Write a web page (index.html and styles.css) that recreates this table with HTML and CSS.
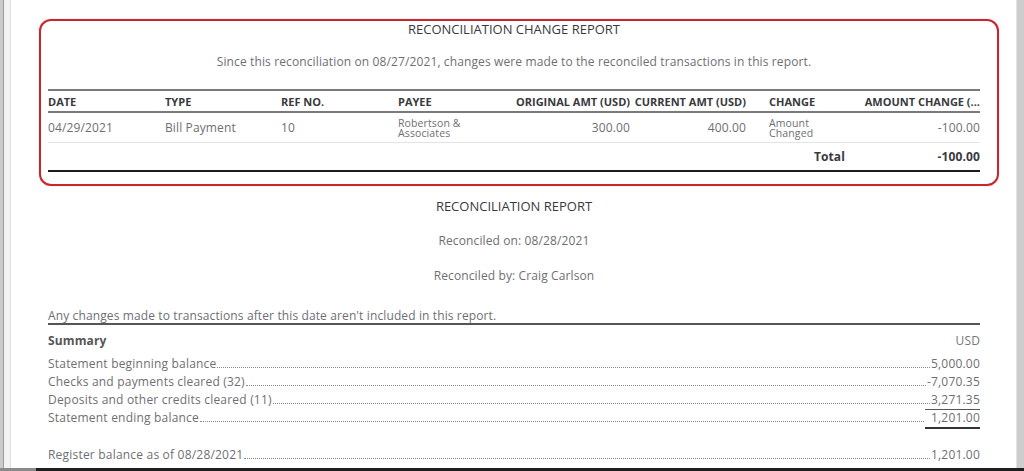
FILE: index.html
```html
<!DOCTYPE html>
<html>
<head>
<meta charset="utf-8">
<link rel="stylesheet" href="styles.css">
</head>
<body>
<div class="window">
  <div class="left-rail"></div>
  <div class="main">
    <div class="doc">
      <section class="change-box">
        <h1 class="title">RECONCILIATION CHANGE REPORT</h1>
        <p class="subtitle">Since this reconciliation on 08/27/2021, changes were made to the reconciled transactions in this report.</p>
        <div class="table">
          <div class="row head">
            <div class="c">DATE</div>
            <div class="c">TYPE</div>
            <div class="c">REF NO.</div>
            <div class="c">PAYEE</div>
            <div class="c num">ORIGINAL AMT (USD)</div>
            <div class="c num">CURRENT AMT (USD)</div>
            <div class="c change">CHANGE</div>
            <div class="c num">AMOUNT CHANGE (...</div>
          </div>
          <div class="row data">
            <div class="c">04/29/2021</div>
            <div class="c">Bill Payment</div>
            <div class="c">10</div>
            <div class="c small"><span class="ln">Robertson &amp;</span><span class="ln">Associates</span></div>
            <div class="c num">300.00</div>
            <div class="c num">400.00</div>
            <div class="c change small"><span class="ln">Amount</span><span class="ln">Changed</span></div>
            <div class="c num">-100.00</div>
          </div>
          <div class="row total">
            <div class="c span6"></div>
            <div class="c total-label">Total</div>
            <div class="c num">-100.00</div>
          </div>
        </div>
      </section>

      <section class="recon">
        <h2 class="title">RECONCILIATION REPORT</h2>
        <p class="meta">Reconciled on: 08/28/2021</p>
        <p class="meta">Reconciled by: Craig Carlson</p>
        <p class="notice">Any changes made to transactions after this date aren't included in this report.</p>
        <div class="summary-head">
          <span class="summary-label">Summary</span>
          <span class="usd">USD</span>
        </div>
        <div class="line"><span class="lbl">Statement beginning balance</span><span class="dots"></span><span class="val">5,000.00</span></div>
        <div class="line"><span class="lbl">Checks and payments cleared (32)</span><span class="dots"></span><span class="val">-7,070.35</span></div>
        <div class="line"><span class="lbl">Deposits and other credits cleared (11)</span><span class="dots"></span><span class="val">3,271.35</span></div>
        <div class="line"><span class="lbl">Statement ending balance</span><span class="dots"></span><span class="val ending">1,201.00</span></div>
        <div class="line register"><span class="lbl">Register balance as of 08/28/2021</span><span class="dots"></span><span class="val">1,201.00</span></div>
      </section>
    </div>
  </div>
  <div class="right-rail"></div>
</div>
<div class="bottom-bar"></div>
</body>
</html>
```

FILE: styles.css
```css
html, body {
  margin: 0;
  padding: 0;
  background: #ffffff;
}

body {
  font-family: "Open Sans", "DejaVu Sans", sans-serif;
  color: #6e6f74;
  font-size: 12px;
  letter-spacing: 0.12px;
  width: 1024px;
  height: 471px;
  overflow: hidden;
}

.window {
  display: flex;
  height: 468px;
}

.left-rail {
  width: 11px;
  flex: none;
  background: linear-gradient(to right, #cbcbcb 0 3px, #9c9c9c 3px 4px, #f3f3f3 4px 10px, #dedede 10px 11px);
}

.right-rail {
  width: 8px;
  flex: none;
  background: linear-gradient(to right, #e2e2e2 0 1px, #cdcdcd 1px 8px);
}

.main {
  flex: 1;
  overflow: hidden;
}

.bottom-bar {
  height: 3px;
  background: linear-gradient(to right, #8a8a8a 0 36px, #1e1e1e 36px);
}

.doc {
  padding: 19px 36px 0 37px;
}

.title {
  margin: 0;
  font-size: 13px;
  line-height: 16px;
  font-weight: 400;
  letter-spacing: 0;
  color: #393a3d;
  text-align: center;
}

.change-box {
  margin: 0 -19px 0 -9px;
  padding: 0 17px 12px 7px;
  border: 2px solid #c8262c;
  border-radius: 12px;
  box-shadow: 0 0 1px rgba(200, 38, 44, 0.5);
}

.subtitle {
  margin: 17px 0 0;
  line-height: 15px;
  text-align: center;
}

.table {
  margin-top: 20px;
}

.row {
  display: grid;
  grid-template-columns: 117px 116px 117px 116px 116px 116px 117px 117px;
  align-items: center;
}

.head {
  height: 20px;
  border-top: 2px solid #7a7a7a;
  border-bottom: 2px solid #7a7a7a;
  font-weight: 700;
  color: #393a3d;
  font-size: 11px;
  letter-spacing: 0;
}

.data {
  height: 29px;
  border-bottom: 1px solid #e4e4e4;
}

.total {
  height: 27px;
  border-bottom: 2px solid #1c1c1c;
  font-weight: 700;
  color: #393a3d;
}

.c {
  white-space: nowrap;
  overflow: hidden;
}

.num {
  text-align: right;
}

.change {
  padding-left: 23px;
}

.c.small {
  display: flex;
  flex-direction: column;
  font-size: 10.5px;
  overflow: visible;
}

.ln {
  display: block;
  height: 10px;
  line-height: 10px;
}

.span6 {
  grid-column: span 6;
}

.total-label {
  text-align: right;
  padding-right: 18px;
}

.recon .title {
  margin-top: 12px;
}

.meta {
  margin: 19px 0 0;
  line-height: 15px;
  text-align: center;
}

.meta + .meta {
  margin-top: 20px;
}

.notice {
  margin: 25px 0 0;
  line-height: 15px;
  border-bottom: 2px solid #555555;
}

.summary-head {
  display: flex;
  justify-content: space-between;
  margin-top: 8px;
  line-height: 15px;
}

.summary-label {
  font-weight: 700;
  color: #555659;
}

.usd {
  color: #777777;
}

.summary-head + .line {
  margin-top: 7px;
}

.line {
  display: flex;
  align-items: baseline;
  line-height: 18px;
  letter-spacing: 0.2px;
}

.lbl {
  flex: none;
}

.dots {
  flex: 1;
  border-bottom: 1px dotted #8a8a8a;
  margin: 0 1px;
}

.val {
  flex: none;
  text-align: right;
}

.val.ending {
  line-height: 15px;
  padding: 0 0 2px 6px;
  border-top: 1px solid #555555;
  border-bottom: 2px solid #333333;
}

.register {
  margin-top: 17px;
}
```
